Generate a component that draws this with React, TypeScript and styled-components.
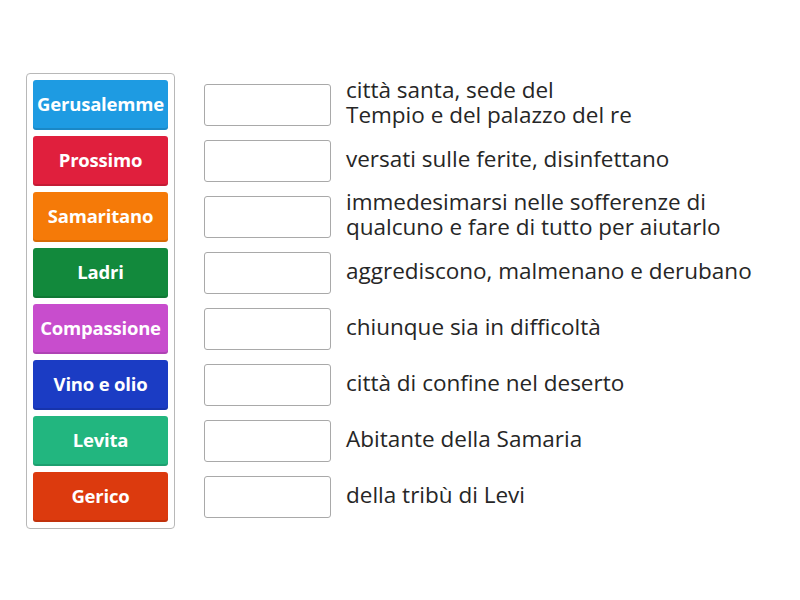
import styled, { createGlobalStyle } from "styled-components";

const GlobalStyle = createGlobalStyle`
  body {
    margin: 0;
    background: #fff;
    font-family: "Open Sans", "Liberation Sans", sans-serif;
  }
`

const Page = styled.div`
  display: flex;
  align-items: flex-start;
  padding: 73px 0 0 26px;
  width: 800px;
  height: 600px;
  box-sizing: border-box;
`

const TileBox = styled.div`
  display: flex;
  flex-direction: column;
  gap: 6px;
  padding: 6px;
  border: 1px solid #b8b8b8;
  border-radius: 4px;
`

const Tile = styled.div<{ $color: string }>`
  display: flex;
  align-items: center;
  justify-content: center;
  width: 135px;
  height: 50px;
  padding-bottom: 4px;
  box-sizing: border-box;
  border-radius: 3px;
  background: ${({ $color }) => $color};
  box-shadow: inset 0 -2px 0 rgba(0, 0, 0, 0.12);
  color: #fff;
  font-weight: 700;
  font-size: 18.5px;
  letter-spacing: -0.2px;
  white-space: nowrap;
`

const Rows = styled.div`
  display: flex;
  flex-direction: column;
  gap: 6px;
  margin: 7px 0 0 29px;
`

const Row = styled.div`
  display: flex;
  align-items: center;
  height: 50px;
  gap: 15px;
`

const Slot = styled.div`
  flex: none;
  width: 125px;
  height: 40px;
  border: 1px solid #a9a9a9;
  border-radius: 3px;
  background: #fff;
`

const Definition = styled.div`
  color: #262626;
  font-size: 22.5px;
  line-height: 25px;
  padding-bottom: 6px;
  white-space: pre-line;
`

const tiles = [
  { label: "Gerusalemme", color: "#1e9be2" },
  { label: "Prossimo", color: "#e01f3d" },
  { label: "Samaritano", color: "#f57a08" },
  { label: "Ladri", color: "#12893c" },
  { label: "Compassione", color: "#c84dcd" },
  { label: "Vino e olio", color: "#1b3cc4" },
  { label: "Levita", color: "#22b67f" },
  { label: "Gerico", color: "#dc3a0e" },
]

const definitions = [
  "città santa, sede del\nTempio e del palazzo del re",
  "versati sulle ferite, disinfettano",
  "immedesimarsi nelle sofferenze di\nqualcuno e fare di tutto per aiutarlo",
  "aggrediscono, malmenano e derubano",
  "chiunque sia in difficoltà",
  "città di confine nel deserto",
  "Abitante della Samaria",
  "della tribù di Levi",
]

export default function App() {
  return (
    <>
      <GlobalStyle />
      <Page>
        <TileBox>
          {tiles.map((t) => (
            <Tile key={t.label} $color={t.color}>{t.label}</Tile>
          ))}
        </TileBox>
        <Rows>
          {definitions.map((d) => (
            <Row key={d}>
              <Slot />
              <Definition>{d}</Definition>
            </Row>
          ))}
        </Rows>
      </Page>
    </>
  )
}
